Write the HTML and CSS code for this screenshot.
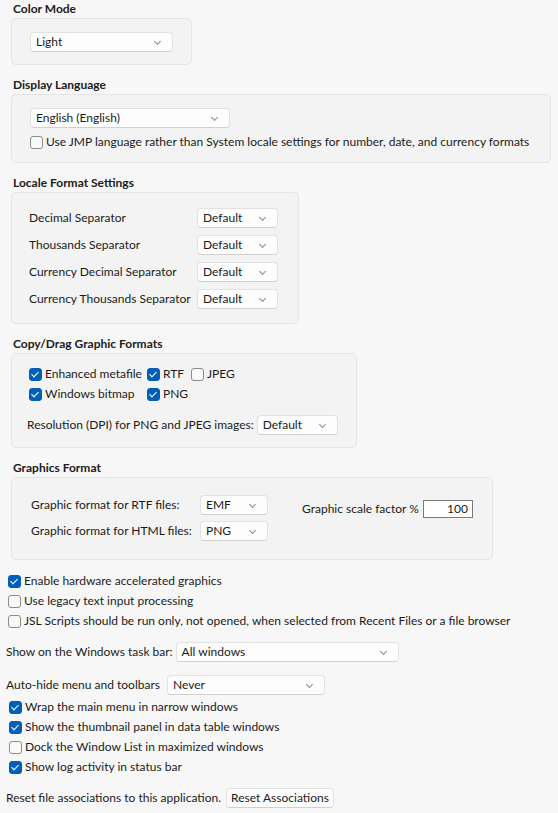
FILE: index.html
```html
<!DOCTYPE html>
<html lang="en">
<head>
    <meta charset="UTF-8">
    <meta name="viewport" content="width=device-width, initial-scale=1.0">
    <title>Preferences - General</title>
    <link rel="stylesheet" href="styles.css">
</head>
<body>

    <div class="prefs">
        <h2 class="group-title first">Color Mode</h2>
        <div class="panel color-panel">
            <div class="select w-142"><span>Light</span><i class="chev"></i></div>
        </div>

        <h2 class="group-title">Display Language</h2>
        <div class="panel lang-panel">
            <div class="select w-200"><span>English (English)</span><i class="chev"></i></div>
            <label class="check lang-check"><span class="box"></span>Use JMP language rather than System locale settings for number, date, and currency formats</label>
        </div>

        <h2 class="group-title">Locale Format Settings</h2>
        <div class="panel locale-panel">
            <div class="locale-grid">
                <span class="lbl">Decimal Separator</span>
                <div class="select w-81"><span>Default</span><i class="chev"></i></div>
                <span class="lbl">Thousands Separator</span>
                <div class="select w-81"><span>Default</span><i class="chev"></i></div>
                <span class="lbl">Currency Decimal Separator</span>
                <div class="select w-81"><span>Default</span><i class="chev"></i></div>
                <span class="lbl">Currency Thousands Separator</span>
                <div class="select w-81"><span>Default</span><i class="chev"></i></div>
            </div>
        </div>

        <h2 class="group-title">Copy/Drag Graphic Formats</h2>
        <div class="panel copy-panel">
            <div class="format-grid">
                <label class="check"><span class="box on"></span>Enhanced metafile</label>
                <label class="check"><span class="box on"></span>RTF</label>
                <label class="check"><span class="box"></span>JPEG</label>
                <label class="check"><span class="box on"></span>Windows bitmap</label>
                <label class="check"><span class="box on"></span>PNG</label>
                <span></span>
            </div>
            <div class="row dpi-row">
                <span class="lbl">Resolution (DPI) for PNG and JPEG images:</span>
                <div class="select w-81"><span>Default</span><i class="chev"></i></div>
            </div>
        </div>

        <h2 class="group-title">Graphics Format</h2>
        <div class="panel gfx-panel">
            <div class="gfx-grid">
                <span class="lbl">Graphic format for RTF files:</span>
                <div class="select w-68"><span>EMF</span><i class="chev"></i></div>
                <span class="lbl">Graphic format for HTML files:</span>
                <div class="select w-68"><span>PNG</span><i class="chev"></i></div>
            </div>
            <div class="row scale-row">
                <span class="lbl">Graphic scale factor %</span>
                <input class="num" type="text" value="100">
            </div>
        </div>

        <div class="loose-checks">
            <label class="check"><span class="box on"></span>Enable hardware accelerated graphics</label>
            <label class="check"><span class="box"></span>Use legacy text input processing</label>
            <label class="check"><span class="box"></span>JSL Scripts should be run only, not opened, when selected from Recent Files or a file browser</label>
        </div>

        <div class="row taskbar-row">
            <span class="lbl">Show on the Windows task bar:</span>
            <div class="select w-223"><span>All windows</span><i class="chev"></i></div>
        </div>

        <div class="row autohide-row">
            <span class="lbl">Auto-hide menu and toolbars</span>
            <div class="select w-158"><span>Never</span><i class="chev"></i></div>
        </div>

        <div class="loose-checks window-checks">
            <label class="check"><span class="box on"></span>Wrap the main menu in narrow windows</label>
            <label class="check"><span class="box on"></span>Show the thumbnail panel in data table windows</label>
            <label class="check"><span class="box"></span>Dock the Window List in maximized windows</label>
            <label class="check"><span class="box on"></span>Show log activity in status bar</label>
        </div>

        <div class="row reset-row">
            <span class="lbl">Reset file associations to this application.</span>
            <button class="btn" type="button">Reset Associations</button>
        </div>
    </div>

</body>
</html>
```

FILE: styles.css
```css
body {
    margin: 0;
    background-color: #f7f7f7;
    color: #1b1b1b;
    font-family: Lato, "Liberation Sans", sans-serif;
    font-size: 12px;
    line-height: 16px;
}
.prefs {
    width: 558px;
    height: 813px;
    overflow: hidden;
}
.group-title {
    margin: 12px 0 1px 13px;
    font-size: 12px;
    line-height: 16px;
    font-weight: 700;
    color: #202020;
}
.group-title.first {
    margin-top: 1px;
}
.panel {
    margin-left: 11px;
    background-color: #f3f3f3;
    border: 1px solid #e5e5e5;
    border-radius: 5px;
    box-sizing: border-box;
}

/* dropdowns */
.select {
    position: relative;
    height: 18px;
    line-height: 18px;
    padding-left: 5px;
    background-color: #fdfdfd;
    border: 1px solid #e2e2e2;
    border-bottom-color: #d0d0d0;
    border-radius: 4px;
    box-sizing: content-box;
}
.chev {
    position: absolute;
    right: 12px;
    top: 6px;
    width: 4px;
    height: 4px;
    border-right: 1px solid #8a8a8a;
    border-bottom: 1px solid #8a8a8a;
    transform: rotate(45deg);
}
.w-142 { width: 136px; }
.w-200 { width: 193px; }
.w-81 { width: 74px; }
.w-68 { width: 61px; }
.w-223 { width: 216px; }
.w-158 { width: 151px; }

/* checkboxes */
.check {
    display: flex;
    align-items: center;
    gap: 3px;
    height: 16px;
    white-space: nowrap;
}
.box {
    width: 11px;
    height: 11px;
    border: 1px solid #8b8b8b;
    border-radius: 3px;
    background-color: #f9f9f9;
    position: relative;
    flex: none;
}
.box.on {
    background-color: #005fb8;
    border-color: #005fb8;
}
.box.on::after {
    content: "";
    position: absolute;
    left: 3px;
    top: 1px;
    width: 3px;
    height: 6px;
    border-right: 1.3px solid #fff;
    border-bottom: 1.3px solid #fff;
    transform: rotate(45deg);
}

.row {
    display: flex;
    align-items: center;
}

/* group panels */
.color-panel {
    width: 181px;
    padding: 13px 0 12px 18px;
}
.lang-panel {
    width: 540px;
    padding: 13px 0 12px 18px;
}
.lang-check {
    margin-top: 6px;
}
.locale-panel {
    width: 288px;
    padding: 15px 0 14px 17px;
}
.locale-grid {
    display: grid;
    grid-template-columns: 168px auto;
    row-gap: 7px;
    align-items: center;
}
.copy-panel {
    width: 346px;
    padding: 12px 0 12px 17px;
}
.format-grid {
    display: grid;
    grid-template-columns: 118px 44px auto;
    row-gap: 4px;
}
.dpi-row {
    margin-top: 13px;
    margin-left: -2px;
    gap: 3px;
}
.gfx-panel {
    width: 482px;
    padding: 17px 0 18px 19px;
    display: flex;
    align-items: flex-start;
}
.gfx-grid {
    display: grid;
    grid-template-columns: 169px auto;
    row-gap: 6px;
    align-items: center;
}
.scale-row {
    margin: 5px 0 0 34px;
    gap: 4px;
}
.num {
    width: 44px;
    height: 16px;
    padding: 0 4px 0 0;
    border: 1px solid #7a7a7a;
    background-color: #fff;
    font: inherit;
    color: #1b1b1b;
    text-align: right;
    box-sizing: content-box;
}

.loose-checks {
    margin: 13px 0 0 8px;
    display: flex;
    flex-direction: column;
    gap: 4px;
}
.taskbar-row {
    margin: 13px 0 0 6px;
    gap: 3px;
}
.autohide-row {
    margin: 13px 0 0 6px;
    gap: 7px;
}
.window-checks {
    margin: 4px 0 0 9px;
    gap: 4px;
}
.reset-row {
    margin: 13px 0 0 6px;
    gap: 5px;
}
.btn {
    height: 20px;
    padding: 0 4px;
    background-color: #fdfdfd;
    border: 1px solid #e2e2e2;
    border-bottom-color: #d0d0d0;
    border-radius: 4px;
    font: inherit;
    color: #1b1b1b;
}
```
